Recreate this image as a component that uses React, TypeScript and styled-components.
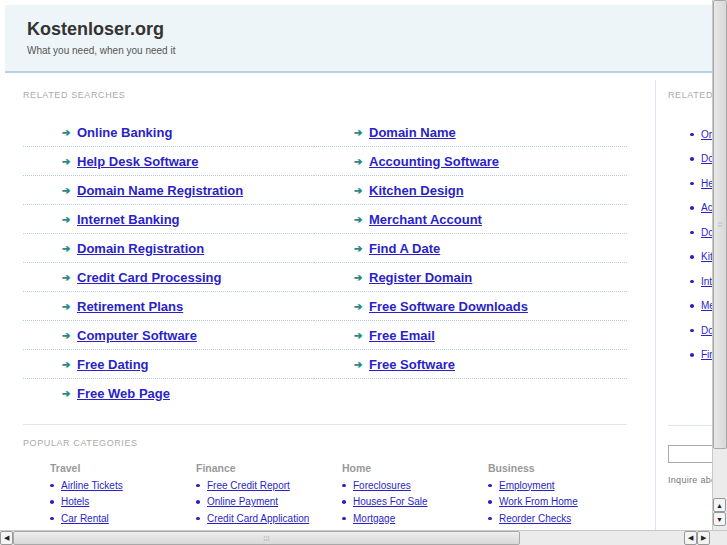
import React from "react";
import styled, { createGlobalStyle } from "styled-components";

const Global = createGlobalStyle`
  html, body { margin: 0; padding: 0; overflow: hidden; background: #fff; }
  body { font-family: "Liberation Sans", Arial, sans-serif; }
`;

const Frame = styled.div`width:727px;height:545px;display:flex;flex-direction:column;background:#fff;`;
const Top = styled.div`display:flex;height:530px;`;
const Viewport = styled.div`width:712px;height:530px;overflow:hidden;`;
const Page = styled.div`width:820px;padding:5px 0 0 5px;`;
const Header = styled.div`height:66px;background:#eef5f8;border-bottom:2px solid #b8cfe6;padding:0 0 0 22px;display:flex;flex-direction:column;justify-content:center;gap:5px;`;
const Title = styled.div`font-size:18px;font-weight:bold;color:#333;margin-top:-2px;`;
const Tag = styled.div`font-size:10px;color:#555;`;
const Body = styled.div`display:flex;`;
const Main = styled.div`width:650px;padding:0 28px 0 18px;box-sizing:border-box;`;
const Side = styled.div`border-left:1px solid #dde7f0;margin-top:7px;padding:10px 0 0 12px;width:160px;height:460px;overflow:hidden;`;
const Label = styled.div`font-size:9px;color:#aaa;letter-spacing:0.6px;text-transform:uppercase;white-space:nowrap;`;
const Grid = styled.div`display:grid;grid-template-columns:291px 1fr;margin-top:18px;`;
const Row = styled.div<{ $last?: boolean }>`height:29px;display:flex;align-items:center;padding-left:39px;box-sizing:border-box;border-bottom:${p => p.$last ? "none" : "1px dotted #b8cce4"};`;
const Row2 = styled(Row)`padding-left:40px;`;
const Arrow = styled.span`color:#2a8a80;font-size:10px;width:15px;font-weight:bold;`;
const BigLink = styled.a<{ $plain?: boolean }>`color:#2a1fc8;font-size:13px;font-weight:bold;text-decoration:${p => p.$plain ? "none" : "underline"};`;
const Rule = styled.div`border-top:1px solid #dde7f0;margin-top:16px;`;
const PopLabel = styled(Label)`margin-top:13px;`;
const Cats = styled.div`display:grid;grid-template-columns:repeat(4,146px);padding-left:27px;margin-top:14px;`;
const CatHead = styled.div`font-size:10.5px;font-weight:bold;color:#999;margin-bottom:3px;`;
const SmallRow = styled.div`height:16.5px;display:flex;align-items:center;`;
const Bullet = styled.span`width:4px;height:3.5px;border-radius:50%;background:#2a1fc8;margin-right:7px;flex:none;`;
const SmallLink = styled.a`color:#2a1fc8;font-size:10px;text-decoration:underline;white-space:nowrap;`;
const SideList = styled.div`margin-top:22px;padding-left:22px;`;
const SideRow = styled.div`height:24.5px;display:flex;align-items:center;`;
const SideRule = styled.div`border-top:1px solid #dde7f0;margin-top:58px;`;
const Input = styled.div`margin-top:19px;height:16px;border:1px solid #aaa;width:60px;`;
const Inq = styled.div`font-size:9px;color:#777;margin-top:12px;letter-spacing:0.3px;white-space:nowrap;`;

const VBar = styled.div`width:15px;height:530px;background:#ebebeb;border-left:1px solid #c8c8c8;box-sizing:border-box;display:flex;flex-direction:column;`;
const VThumb = styled.div`height:447px;background:linear-gradient(90deg,#e8e8e8,#d8d8d8);border:1px solid #a8a8a8;border-radius:2px;display:flex;align-items:center;justify-content:center;color:#aaa;font-size:8px;`;
const VTrack = styled.div`flex:1;`;
const Btn = styled.div`width:13px;height:14px;border:1px solid #999;border-radius:2px;background:#f4f4f4;display:flex;align-items:center;justify-content:center;font-size:7px;color:#222;box-sizing:border-box;`;
const HBar = styled.div`height:15px;display:flex;background:#ebebeb;border-top:1px solid #c8c8c8;box-sizing:border-box;`;
const HThumb = styled.div`width:505px;background:linear-gradient(#eee,#d8d8d8);border:1px solid #a8a8a8;border-radius:2px;display:flex;align-items:center;justify-content:center;color:#aaa;font-size:8px;`;
const Spacer = styled.div<{ $w?: number; $h?: number }>`flex:${p => (p.$w || p.$h) ? "none" : 1};width:${p => p.$w ?? 0}px;height:${p => p.$h ?? 0}px;`;

const left = ["Online Banking","Help Desk Software","Domain Name Registration","Internet Banking","Domain Registration","Credit Card Processing","Retirement Plans","Computer Software","Free Dating","Free Web Page"];
const right = ["Domain Name","Accounting Software","Kitchen Design","Merchant Account","Find A Date","Register Domain","Free Software Downloads","Free Email","Free Software"];
const cats = [
  ["Travel", ["Airline Tickets","Hotels","Car Rental"]],
  ["Finance", ["Free Credit Report","Online Payment","Credit Card Application"]],
  ["Home", ["Foreclosures","Houses For Sale","Mortgage"]],
  ["Business", ["Employment","Work From Home","Reorder Checks"]],
] as const;
const side = ["Online Banking","Domain Name","Help Desk Software","Accounting Software","Domain Registration","Kitchen Design","Internet Banking","Merchant Account","Domain Registration","Find A Date"];

export default function App() {
  return (
    <Frame>
      <Global />
      <Top>
        <Viewport>
          <Page>
            <Header>
              <Title>Kostenloser.org</Title>
              <Tag>What you need, when you need it</Tag>
            </Header>
            <Body>
              <Main>
                <Spacer $h={17} />
                <Label>Related Searches</Label>
                <Grid>
                  {Array.from({ length: 10 }).map((_, i) => (
                    <React.Fragment key={i}>
                      <Row $last={i === 9}><Arrow>➔</Arrow><BigLink $plain={i === 0} href="#">{left[i]}</BigLink></Row>
                      <Row2 $last={i === 9}>{right[i] && <><Arrow>➔</Arrow><BigLink href="#">{right[i]}</BigLink></>}</Row2>
                    </React.Fragment>
                  ))}
                </Grid>
                <Rule />
                <PopLabel>Popular Categories</PopLabel>
                <Cats>
                  {cats.map(([h, ls]) => (
                    <div key={h}>
                      <CatHead>{h}</CatHead>
                      {ls.map(l => <SmallRow key={l}><Bullet /><SmallLink href="#">{l}</SmallLink></SmallRow>)}
                    </div>
                  ))}
                </Cats>
              </Main>
              <Side>
                <Label>Related Searches</Label>
                <SideList>
                  {side.map((s, i) => <SideRow key={i}><Bullet /><SmallLink href="#">{s}</SmallLink></SideRow>)}
                </SideList>
                <SideRule />
                <Input />
                <Inq>Inquire about this domain</Inq>
              </Side>
            </Body>
          </Page>
        </Viewport>
        <VBar>
          <VThumb>⁞⁞</VThumb>
          <VTrack />
          <Btn>▲</Btn>
          <Btn>▼</Btn>
          <Spacer $h={4} />
        </VBar>
      </Top>
      <HBar>
        <Btn>◀</Btn>
        <HThumb>⁞⁞⁞</HThumb>
        <Spacer />
        <Btn>◀</Btn>
        <Btn>▶</Btn>
        <Spacer $w={17} />
      </HBar>
    </Frame>
  );
}
